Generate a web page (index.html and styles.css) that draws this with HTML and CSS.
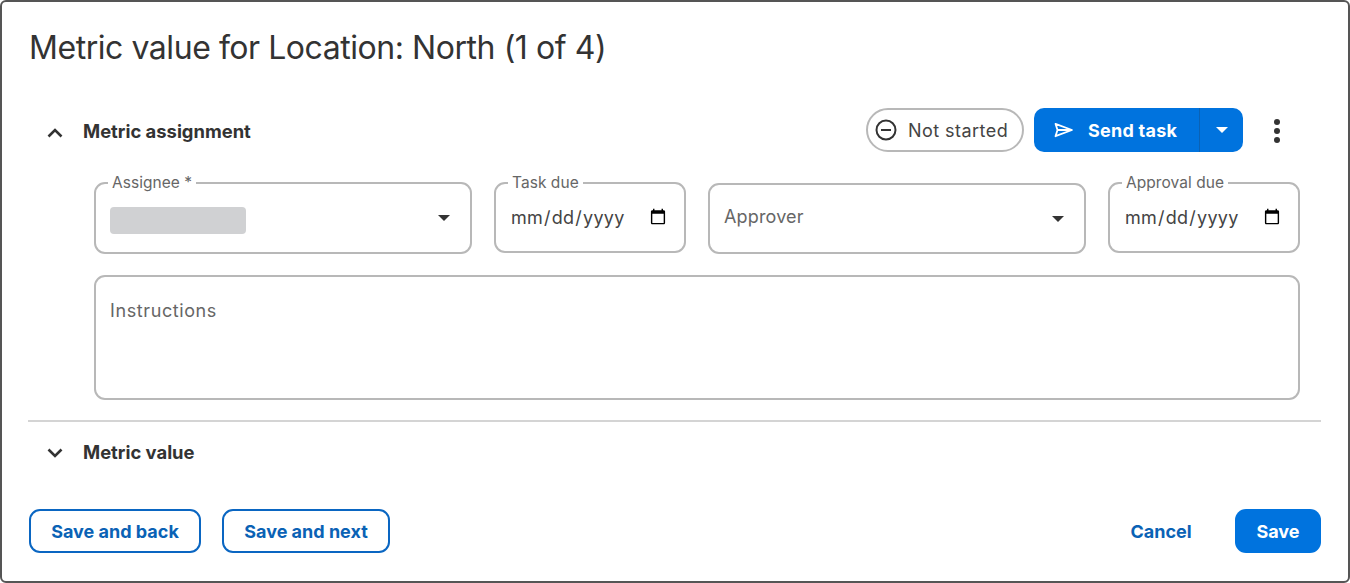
FILE: index.html
```html
<!DOCTYPE html>
<html lang="en">
<head>
<meta charset="utf-8">
<title>Metric value</title>
<link rel="stylesheet" href="styles.css">
</head>
<body>
<main class="dialog">
  <h1 class="title">Metric value for Location: North (1 of 4)</h1>

  <section class="section-head assignment-head">
    <svg class="chevron" viewBox="0 0 16 10" aria-hidden="true"><path d="M1.500 8.500 8 2l6.500 6.500"/></svg>
    <h2 class="section-title">Metric assignment</h2>
    <div class="actions">
      <div class="status">
        <svg class="status-icon" viewBox="0 0 22 22" aria-hidden="true"><circle cx="11" cy="11" r="9.500"/><path d="M6 11h10"/></svg>
        <span>Not started</span>
      </div>
      <div class="split">
        <button class="split-main" type="button">
          <svg class="send-icon" viewBox="0 0 20 16" aria-hidden="true"><path d="M1.500 1.800 18 8 1.500 14.200l2-6.200zM3.500 8H18"/></svg>
          Send task
        </button>
        <button class="split-caret" type="button" aria-label="More send options"><span class="caret caret-white"></span></button>
      </div>
      <button class="kebab" type="button" aria-label="More"><i></i><i></i><i></i></button>
    </div>
  </section>

  <div class="fields">
    <fieldset class="field select-field">
      <legend class="legend">Assignee *</legend>
      <span class="redacted"></span>
      <span class="caret"></span>
    </fieldset>
    <fieldset class="field date-field">
      <legend class="legend">Task due</legend>
      <input class="date" type="date" aria-label="Task due">
    </fieldset>
    <div class="field select-field plain">
      <span class="placeholder">Approver</span>
      <span class="caret"></span>
    </div>
    <fieldset class="field date-field">
      <legend class="legend">Approval due</legend>
      <input class="date" type="date" aria-label="Approval due">
    </fieldset>
    <textarea class="instructions" placeholder="Instructions" aria-label="Instructions"></textarea>
  </div>

  <hr class="divider">

  <section class="section-head value-head">
    <svg class="chevron" viewBox="0 0 16 10" aria-hidden="true"><path d="M1.500 1.500 8 8l6.500-6.500"/></svg>
    <h2 class="section-title">Metric value</h2>
  </section>

  <footer class="footer">
    <button class="btn outline back" type="button">Save and back</button>
    <button class="btn outline next" type="button">Save and next</button>
    <button class="btn link" type="button">Cancel</button>
    <button class="btn solid" type="button">Save</button>
  </footer>
</main>
</body>
</html>
```
FILE: styles.css
```css
* { box-sizing: border-box; }
html, body { margin: 0; padding: 0; background: #fff; }
body { font-family: "Inter", "Roboto", "Liberation Sans", sans-serif; color: #333; }
button { font-family: inherit; cursor: pointer; }

.dialog {
  width: 1350px;
  height: 583px;
  border: 2px solid #555;
  border-radius: 6px;
  padding: 0 27px;
  display: flex;
  flex-direction: column;
  overflow: hidden;
}

.title {
  margin: 27px 0 0;
  height: 38px;
  font-size: 32px;
  line-height: 38px;
  font-weight: 400;
  letter-spacing: -0.45px;
  color: #333;
}

.section-head { display: flex; align-items: center; }
.assignment-head { margin-top: 41px; height: 44px; padding-left: 18px; }
.value-head { margin-top: 8px; height: 44px; padding-left: 18px; }
.chevron { width: 16px; height: 10px; fill: none; stroke: #333; stroke-width: 2.600; margin-right: 20px; flex: none; }
.assignment-head .chevron { margin-top: 6px; }
.value-head .chevron { margin-top: 2px; }
.section-title { margin: 0; font-size: 18.400px; line-height: 24px; font-weight: 700; color: #333; }
.assignment-head .section-title { margin-top: 2px; }

.actions { margin-left: auto; display: flex; align-items: center; }
.status {
  width: 158px;
  height: 44px;
  border: 2px solid #b8b8b8;
  border-radius: 22px;
  display: flex;
  align-items: center;
  padding-left: 7px;
  gap: 11px;
  font-size: 18px;
  letter-spacing: 0.45px;
  color: #444;
}
.status-icon { width: 22px; height: 22px; fill: none; stroke: #333; stroke-width: 2; flex: none; }

.split { display: flex; margin-left: 10px; height: 44px; border-radius: 10px; overflow: hidden; background: #0073de; }
.split-main {
  width: 166px;
  border: 0;
  border-right: 1px solid #0a62b5;
  background: transparent;
  color: #fff;
  font-size: 18px;
  font-weight: 700;
  letter-spacing: 0.25px;
  display: flex;
  align-items: center;
  padding: 0 0 0 20px;
  gap: 14px;
}
.send-icon { width: 20px; height: 16px; fill: none; stroke: #fff; stroke-width: 1.800; stroke-linejoin: round; flex: none; }
.split-caret { width: 43px; border: 0; background: transparent; display: flex; align-items: center; justify-content: center; padding: 0; }

.caret { width: 0; height: 0; border-left: 6.500px solid transparent; border-right: 6.500px solid transparent; border-top: 6.500px solid #333; }
.caret-white { border-left-width: 6px; border-right-width: 6px; border-top: 6px solid #fff; }

.kebab { width: 20px; height: 24px; margin: 2px 34px 0 24px; padding: 0; border: 0; background: none; display: flex; flex-direction: column; align-items: center; justify-content: space-between; }
.kebab i { width: 6px; height: 6px; border-radius: 50%; background: #333; display: block; }

.fields {
  margin: 31px 19px 0 65px;
  display: grid;
  grid-template-columns: 378px 192px 378px 192px;
  column-gap: 22px;
  row-gap: 21px;
  align-items: start;
}
.field {
  margin: 0;
  min-width: 0;
  border: 2px solid #b8b8b8;
  border-radius: 11px;
  display: flex;
  align-items: center;
}
fieldset.field { margin-top: -8px; padding-top: 0; }
.legend { margin-left: -2px; padding: 0 4px; font-size: 15.500px; line-height: 16px; letter-spacing: 0.05px; color: #666; }
.select-field { height: 79px; justify-content: space-between; padding: 0 20px 8px 14px; }
.select-field.plain { height: 71px; padding-bottom: 2px; }
.select-field.plain .placeholder { margin-bottom: 2px; }
.select-field.plain .caret { margin-top: 2px; }
.date-field { height: 78px; padding: 0 15px 8px 14px; }
.redacted { width: 136px; height: 27px; margin-top: 6px; border-radius: 4px; background: #d0d1d3; }
.placeholder { font-size: 18px; letter-spacing: 0.15px; color: #666; }
.date {
  width: 100%;
  border: 0;
  padding: 0;
  outline: 0;
  background: transparent;
  font-family: inherit;
  font-size: 18px;
  letter-spacing: 0.25px;
  color: #444;
}
.instructions {
  grid-column: 1 / -1;
  display: block;
  width: 100%;
  height: 125px;
  border: 2px solid #b8b8b8;
  border-radius: 11px;
  padding: 22px 14px;
  resize: none;
  outline: 0;
  font-family: inherit;
  font-size: 18px;
  letter-spacing: 0.6px;
  line-height: 24px;
}
.instructions::placeholder { color: #666; opacity: 1; }

.divider { margin: 20px 0 0 -1px; width: 1293px; border: 0; border-top: 2px solid #d4d4d4; height: 0; }

.footer { margin-top: 35px; display: flex; align-items: center; }
.btn { height: 44px; border-radius: 11px; font-size: 18px; font-weight: 700; padding: 0; }
.outline { background: #fff; border: 2px solid #0a66c2; color: #0a62b5; }
.back { width: 172px; }
.next { width: 168px; margin-left: 21px; }
.link { margin-left: auto; width: 62px; background: none; border: 0; color: #0a62b5; }
.solid { margin-left: 43px; width: 86px; background: #0073de; border: 0; color: #fff; }
```
